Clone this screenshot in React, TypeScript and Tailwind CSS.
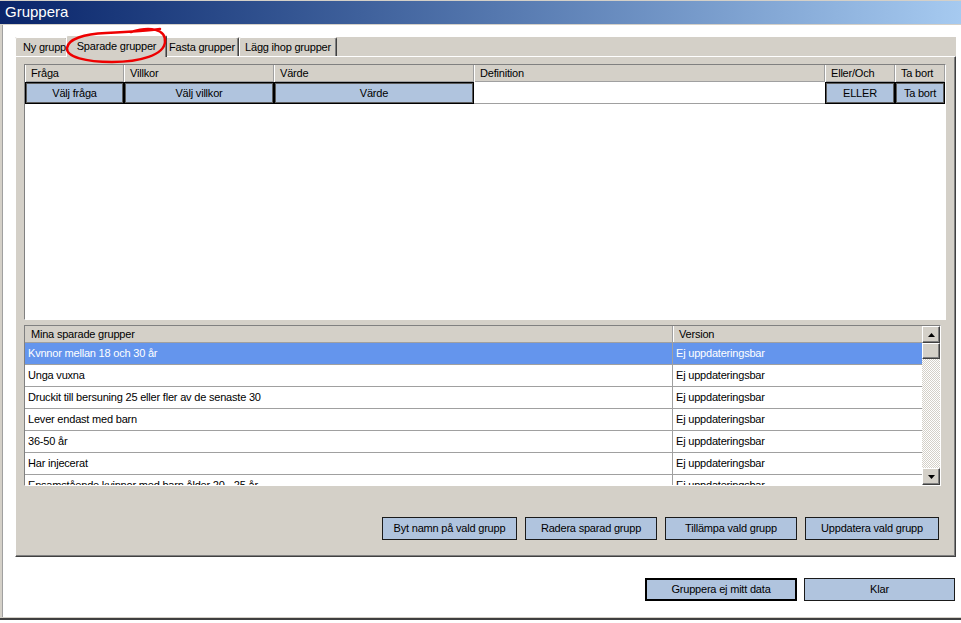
import React from 'react';

const ROWS = [
    'Kvnnor mellan 18 och 30 år',
    'Unga vuxna',
    'Druckit till bersuning 25 eller fler av de senaste 30',
    'Lever endast med barn',
    '36-50 år',
    'Har injecerat',
    'Ensamstående kvinnor med barn ålder 20 - 25 år',
];

const TOP_COLS = [
    { label: 'Fråga', cell: 'Välj fråga' },
    { label: 'Villkor', cell: 'Välj villkor' },
    { label: 'Värde', cell: 'Värde' },
    { label: 'Definition', cell: '' },
    { label: 'Eller/Och', cell: 'ELLER' },
    { label: 'Ta bort', cell: 'Ta bort' },
];

const raised = 'bg-[#d4d0c8] border border-t-white border-l-white border-r-[#404040] border-b-[#404040] shadow-[inset_-1px_-1px_0_#808080]';

const Arrow: React.FC<{ up?: boolean }> = ({ up }) => (
    <svg width="7" height="4" viewBox="0 0 7 4">
        {up ? <polygon points="3.5,0 7,4 0,4" fill="#000" /> : <polygon points="0,0 7,0 3.5,4" fill="#000" />}
    </svg>
);

const Tab: React.FC<{ label: string; className?: string; selected?: boolean }> = ({ label, className = '', selected }) => (
    <div
        className={`flex items-center shrink-0 bg-[#d4d0c8] border-t border-l border-white border-r border-r-[#404040] shadow-[inset_-1px_0_0_#808080] rounded-t-[2px] ${
            selected ? 'relative z-10 h-[22px] -mb-px justify-center' : 'h-[19px]'
        } ${className}`}
    >
        <span className="whitespace-nowrap">{label}</span>
    </div>
);

export default function App() {
    return (
        <div className="relative w-[961px] h-[623px] bg-white flex flex-col overflow-hidden text-[11px] tracking-[-0.2px] text-black font-['Liberation_Sans',Arial,sans-serif]">
            {/* Title bar */}
            <div className="h-[25px] shrink-0 flex items-center pl-[5px] bg-gradient-to-r from-[#0a246a] to-[#a6caf0] border-t border-t-[#d4d0c8] border-b border-b-[#d4d0c8]">
                <span className="text-white text-[15px] tracking-normal">Gruppera</span>
            </div>

            {/* Window body */}
            <div className="h-[595px] shrink-0 flex flex-col pt-[12px] pl-[15px] pr-[6px] shadow-[inset_0_-2px_0_#404040,inset_0_-3px_0_#d4d0c8,inset_2px_0_0_#d4d0c8,inset_3px_0_0_#a0a0a0]">
                {/* Tab control */}
                <div className="w-[941px] h-[520px] bg-[#d4d0c8] flex flex-col">
                    <div className="h-[19px] flex items-end">
                        <Tab label="Ny grupp" className="w-[53px] pl-[7px] overflow-hidden" />
                        <Tab label="Sparade grupper" selected className="w-[101px] -ml-[2px] -mr-[2px]" />
                        <Tab label="Fasta grupper" className="w-[74px] justify-center" />
                        <Tab label="Lägg ihop grupper" className="w-[98px] justify-center" />
                    </div>

                    <div className="flex-1 flex flex-col pt-[7px] pl-[8px] border-t border-l border-white border-r border-b border-r-[#404040] border-b-[#404040] shadow-[inset_-1px_-1px_0_#808080]">
                        {/* Query grid */}
                        <div className="w-[922px] h-[256px] bg-white border border-t-[#808080] border-l-[#808080] border-r-white border-b-white flex flex-col">
                            <div className="grid grid-cols-[99px_150px_200px_351px_70px_50px] h-[17px] bg-[#d4d0c8] border-b border-[#a0a0a0]">
                                {TOP_COLS.map((c) => (
                                    <div key={c.label} className="flex items-center pl-[6px] border-r border-[#a0a0a0] shadow-[inset_1px_0_0_#fff]">
                                        {c.label}
                                    </div>
                                ))}
                            </div>
                            <div className="grid grid-cols-[99px_150px_200px_351px_70px_50px] h-[22px]">
                                {TOP_COLS.map((c) =>
                                    c.cell ? (
                                        <div
                                            key={c.label}
                                            className="flex items-center justify-center bg-[#b0c4de] border border-black shadow-[inset_0_0_0_1px_#5a5a5a]"
                                        >
                                            {c.cell}
                                        </div>
                                    ) : (
                                        <div key={c.label} className="bg-white border-b border-[#a0a0a0]" />
                                    )
                                )}
                            </div>
                        </div>

                        {/* Saved groups list */}
                        <div className="mt-[5px] w-[917px] h-[161px] bg-white border border-t-[#808080] border-l-[#808080] border-r-white border-b-white flex">
                            <div className="flex-1 flex flex-col overflow-hidden">
                                <div className="h-[17px] shrink-0 flex bg-[#d4d0c8] border-b border-[#a0a0a0]">
                                    <div className="w-[648px] flex items-center pl-[6px] border-r border-[#a0a0a0]">Mina sparade grupper</div>
                                    <div className="flex-1 flex items-center pl-[6px] shadow-[inset_1px_0_0_#fff]">Version</div>
                                </div>
                                {ROWS.map((r, i) => (
                                    <div
                                        key={r}
                                        className={`h-[22px] shrink-0 flex border-b border-[#a0a0a0] ${i === 0 ? 'bg-[#6495ed] text-white' : 'bg-white'}`}
                                    >
                                        <div className="w-[648px] flex items-center pl-[3px] border-r border-[#a0a0a0] whitespace-nowrap">{r}</div>
                                        <div className="flex-1 flex items-center pl-[3px] whitespace-nowrap">Ej uppdateringsbar</div>
                                    </div>
                                ))}
                            </div>
                            {/* Scrollbar */}
                            <div className="w-[18px] flex flex-col">
                                <div className={`h-[17px] flex items-center justify-center ${raised}`}>
                                    <Arrow up />
                                </div>
                                <div className={`h-[16px] ${raised}`} />
                                <div className="flex-1 bg-[repeating-conic-gradient(#d4d0c8_0%_25%,#ffffff_0%_50%)] bg-[length:2px_2px]" />
                                <div className={`h-[17px] flex items-center justify-center ${raised}`}>
                                    <Arrow />
                                </div>
                            </div>
                        </div>

                        {/* Group actions */}
                        <div className="mt-[31px] flex gap-[8px] pl-[358px]">
                            {[
                                ['Byt namn på vald grupp', 'w-[135px]'],
                                ['Radera sparad grupp', 'w-[132px]'],
                                ['Tillämpa vald grupp', 'w-[132px]'],
                                ['Uppdatera vald grupp', 'w-[134px]'],
                            ].map(([label, w]) => (
                                <button key={label} className={`${w} h-[23px] bg-[#b0c4de] border border-[#1a1a1a] flex items-center justify-center`}>
                                    {label}
                                </button>
                            ))}
                        </div>
                    </div>
                </div>

                {/* Dialog buttons */}
                <div className="mt-[21px] flex justify-end gap-[7px]">
                    <button className="w-[152px] h-[23px] bg-[#b0c4de] border-2 border-black flex items-center justify-center">
                        Gruppera ej mitt data
                    </button>
                    <button className="w-[151px] h-[23px] bg-[#b0c4de] border border-[#1a1a1a] flex items-center justify-center">
                        Klar
                    </button>
                </div>
            </div>

            {/* Hand-drawn red annotation */}
            <svg className="absolute left-0 top-0 z-20 pointer-events-none" width="961" height="623">
                <path
                    d="M 131 32 C 150 26, 166 29, 165 42 C 164 55, 140 62, 112 62 C 86 62, 66 57, 67 48 C 68 39, 84 34, 106 33 C 126 32, 146 31, 160 29"
                    fill="none"
                    stroke="#ee0000"
                    strokeWidth="2.5"
                    strokeLinecap="round"
                />
            </svg>
        </div>
    );
}
